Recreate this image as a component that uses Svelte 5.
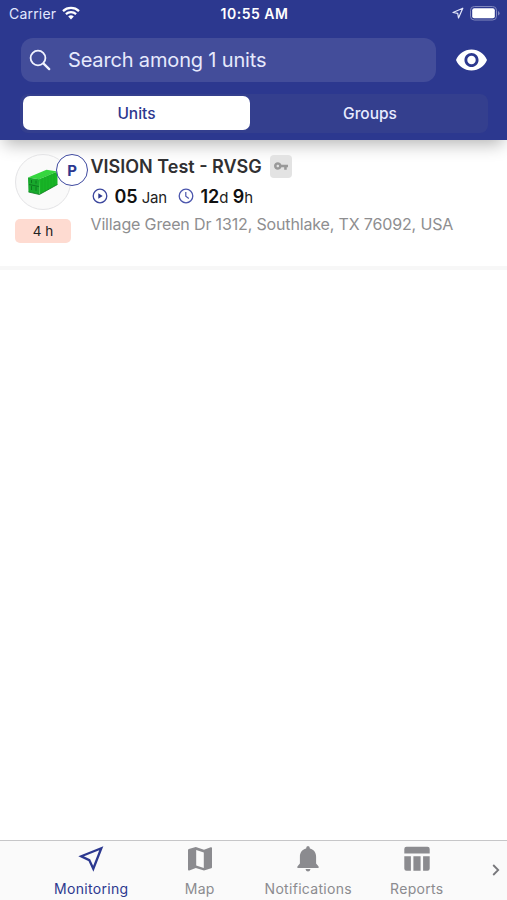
<script>
  let activeTab = $state("Monitoring");
  let activeSegment = $state("Units");

  const segments = ["Units", "Groups"];
  const tabs = ["Monitoring", "Map", "Notifications", "Reports"];
</script>

<div class="screen">
  <header class="header">
    <div class="status-bar">
      <div class="carrier">
        <span>Carrier</span>
        <svg class="wifi" viewBox="0 0 18 14" fill="none" stroke="#fff">
          <path d="M1 5.1a11.7 11.7 0 0 1 16 0" stroke-width="2.3" />
          <path d="M3.9 8.1a7.5 7.5 0 0 1 10.2 0" stroke-width="2.2" />
          <path d="M9 13.5 6.2 10.6a4 4 0 0 1 5.6 0z" fill="#fff" stroke="none" />
        </svg>
      </div>
      <span class="time">10:55 AM</span>
      <div class="indicators">
        <svg class="location" viewBox="0 0 12 12" fill="none" stroke="#e4e7fa">
          <path d="M10.8 1.2 1 5.5l4.7.8.8 4.6z" stroke-width="1.2" stroke-linejoin="round" />
        </svg>
        <svg class="battery" viewBox="0 0 30 15">
          <rect x=".5" y=".5" width="26" height="13.5" rx="3.8" fill="none" stroke="#8087bd" />
          <rect x="2.2" y="2.2" width="22.6" height="10.1" rx="2" fill="#fff" />
          <path d="M28 5v4.6q1.6-.7 1.6-2.3T28 5z" fill="#8087bd" />
        </svg>
      </div>
    </div>

    <div class="search-row">
      <div class="search">
        <svg viewBox="0 0 22 22" fill="none" stroke="#f1f3ff" stroke-linecap="round">
          <circle cx="9" cy="9" r="7.4" stroke-width="1.8" />
          <path d="m14.6 14.6 5.6 5.5" stroke-width="2.3" />
        </svg>
        <span>Search among 1 units</span>
      </div>
      <svg class="eye" viewBox="1 4.5 22 15" fill="#fff">
        <path
          d="M12 4.5C7 4.5 2.73 7.61 1 12c1.73 4.39 6 7.5 11 7.5s9.27-3.11 11-7.5c-1.73-4.39-6-7.5-11-7.5zM12 17c-2.76 0-5-2.24-5-5s2.24-5 5-5 5 2.24 5 5-2.24 5-5 5zm0-8c-1.66 0-3 1.34-3 3s1.34 3 3 3 3-1.34 3-3-1.34-3-3-3z"
        />
      </svg>
    </div>

    <div class="segments">
      {#each segments as segment}
        <button
          class="segment"
          class:selected={segment === activeSegment}
          onclick={() => (activeSegment = segment)}>{segment}</button
        >
      {/each}
    </div>
  </header>

  <main>
    <article class="unit">
      <div class="unit-side">
        <div class="avatar">
          <svg class="container-icon" viewBox="0 0 30 26">
            <path d="M0 8.5 18.5.8 29.5 2.5 11 10.2z" fill="#35d63e" />
            <path d="M0 8.5 11 10.2 11.4 25.5.5 23z" fill="#18a82c" />
            <path d="M11 10.2 29.5 2.5V15.5L11.4 25.5z" fill="#17b526" />
            <path
              d="M14 9v15M17 7.8v14.5M20 6.5v14M23 5.3v13.5M26 4v13"
              stroke="#15a524"
              stroke-width=".6"
            />
            <path
              d="M3.5 11v3M8 11.6v3M3.5 17v4M8 17.8v4M1 15.5l9.8 2"
              stroke="#0b741d"
              stroke-width=".9"
              fill="none"
            />
            <path d="m.5 23 10.9 2.5 18.100-10" fill="none" stroke="#0c7a1d" stroke-width=".8" />
          </svg>
          <span class="parking">P</span>
        </div>
        <span class="age">4 h</span>
      </div>

      <div class="unit-info">
        <div class="name-row">
          <h2>VISION Test - RVSG</h2>
          <span class="key">
            <svg viewBox="1 6 22 12" fill="#999">
              <path
                d="M12.65 10C11.83 7.67 9.61 6 7 6c-3.31 0-6 2.69-6 6s2.69 6 6 6c2.61 0 4.83-1.67 5.65-4H17v4h4v-4h2v-4H12.65zM7 14c-1.1 0-2-.9-2-2s.9-2 2-2 2 .9 2 2-.9 2-2 2z"
              />
            </svg>
          </span>
        </div>

        <div class="stats">
          <svg viewBox="0 0 16 16" fill="none" stroke="#3b469d">
            <circle cx="8" cy="8" r="6.8" stroke-width="1.3" />
            <path d="M6.3 5.2v5.6L10.7 8z" fill="#2c388f" stroke="none" />
          </svg>
          <span class="date"><b>05</b> Jan</span>
          <svg viewBox="0 0 16 16" fill="none" stroke="#4b56ad">
            <circle cx="8" cy="8" r="6.8" stroke-width="1.3" />
            <path d="M7.8 4v4.2l3 2.2" stroke-width="1.2" />
          </svg>
          <span class="duration"><b>12</b>d <b>9</b>h</span>
        </div>

        <p class="address">Village Green Dr 1312, Southlake, TX 76092, USA</p>
      </div>
    </article>
  </main>

  <nav class="tab-bar">
    {#each tabs as tab}
      <button class="tab" class:active={tab === activeTab} onclick={() => (activeTab = tab)}>
        <svg viewBox="0 0 26 26" fill="currentColor">
          {#if tab === "Monitoring"}
            <path
              d="M23.3 2.2 3.2 10.3l8.1 3.8 4 8.6z"
              fill="none"
              stroke="currentColor"
              stroke-width="2.3"
            />
          {:else if tab === "Map"}
            <path
              fill-rule="evenodd"
              d="M1 4q0-.8.8-1.1L8.800 1 17 3.700l6.700-2.500q1.300-.3 1.300.8v19.200q0 .8-.8 1.100L17 24.600 8.800 22l-6.500 2.400Q1 24.800 1 23.600zM9.200 4v15.500l7.600 2.400V6.400z"
            />
          {:else if tab === "Notifications"}
            <path
              d="M13 0q1.900 0 1.900 2.500c4.200 1 6.200 4.400 6.200 8.300v6.800l2.500 2.800v1.500H2.400v-1.500l2.500-2.800v-6.800c0-3.900 2-7.300 6.200-8.300Q11.100 0 13 0zM10.500 23h5q-.5 2.500-2.500 2.500T10.500 23z"
            />
          {:else}
            <path
              d="M2.500.7h21q2.200 0 2.200 2.200v4.600H.3V2.900Q.3.700 2.500.7zM.3 10.200h6.600v14.600H2.500q-2.200 0-2.200-2.200zM9.400 10.200h7.200v14.600H9.400zM19.100 10.200h6.600v12.400q0 2.200-2.200 2.200h-4.400z"
            />
          {/if}
        </svg>
        <span>{tab}</span>
      </button>
    {/each}
    <svg class="more" viewBox="0 0 8 12" fill="none" stroke="#77777b" stroke-width="1.8">
      <path d="m1.2 1 5 5-5 5" />
    </svg>
  </nav>
</div>

<style>
  :global(body) {
    background: #fff;
  }

  .screen {
    height: 100vh;
    display: flex;
    flex-direction: column;
    overflow: hidden;
    font-family: Inter, "Liberation Sans", sans-serif;
    background: #fff;
  }

  button {
    padding: 0;
    border: 0;
    background: none;
    font: inherit;
  }

  svg {
    display: block;
    flex: none;
  }

  .header {
    height: 140px;
    flex: none;
    background: #2c388f;
    box-shadow: 0 8px 16px -4px rgba(0, 0, 0, 0.3);
    color: #fff;
  }

  .status-bar {
    height: 26px;
    padding: 0 7px 0 9px;
    display: grid;
    grid-template-columns: 1fr auto 1fr;
    align-items: center;
    font-size: 14px;
  }

  .carrier {
    display: flex;
    align-items: center;
    gap: 6px;
    color: #e3e7ff;
    letter-spacing: 0.2px;
  }

  .wifi {
    width: 18px;
    height: 14px;
  }

  .time {
    font-weight: 600;
    letter-spacing: 0.5px;
  }

  .indicators {
    display: flex;
    align-items: center;
    justify-content: flex-end;
    gap: 6px;
  }

  .location {
    width: 12px;
    height: 12px;
  }

  .battery {
    width: 30px;
    height: 15px;
  }

  .search-row {
    margin-top: 12px;
    padding: 0 20px 0 21px;
    display: flex;
    align-items: center;
    justify-content: space-between;
  }

  .search {
    width: 415px;
    height: 44px;
    padding-left: 8px;
    box-sizing: border-box;
    display: flex;
    align-items: center;
    gap: 17px;
    border-radius: 12px;
    background: #434d9a;
    color: #e6e9fc;
    font-size: 20px;
    letter-spacing: -0.16px;
  }

  .search svg {
    width: 22px;
    height: 22px;
  }

  .eye {
    width: 31px;
    height: 22px;
  }

  .segments {
    height: 39px;
    margin: 12px 19px 0 20px;
    padding: 2px 0 3px 3px;
    box-sizing: border-box;
    display: flex;
    border-radius: 8px;
    background: #343f8e;
  }

  .segment {
    flex: 1;
    padding-left: 2px;
    border-radius: 7px;
    color: #e8ebff;
    font-size: 15.5px;
    font-weight: 500;
  }

  .segment.selected {
    flex: 0 0 227px;
    padding-left: 0;
    background: #fff;
    color: #2c388f;
  }

  main {
    flex: 1;
  }

  .unit {
    height: 130px;
    padding: 14px 15px 0;
    box-sizing: border-box;
    display: flex;
    gap: 20px;
    border-bottom: 4px solid #f7f7f7;
  }

  .unit-side {
    width: 56px;
  }

  .avatar {
    position: relative;
    width: 56px;
    height: 56px;
    box-sizing: border-box;
    display: flex;
    align-items: center;
    justify-content: center;
    border: 1px solid #e4e4e6;
    border-radius: 50%;
    background: #fafafa;
  }

  .container-icon {
    width: 30px;
    height: 26px;
  }

  .parking {
    position: absolute;
    top: -1px;
    left: 40px;
    width: 32px;
    height: 32px;
    box-sizing: border-box;
    border: 1.5px solid #3f4aa0;
    border-radius: 50%;
    background: #fff;
    color: #2c388f;
    font-size: 15px;
    font-weight: 700;
    line-height: 32px;
    text-align: center;
  }

  .age {
    display: block;
    height: 24px;
    margin-top: 9px;
    border-radius: 5px;
    background: #fedbd1;
    color: #222;
    font-size: 13.5px;
    line-height: 24px;
    text-align: center;
  }

  .unit-info {
    margin-left: -0.5px;
  }

  .name-row {
    height: 24px;
    display: flex;
    align-items: center;
    gap: 8px;
  }

  h2 {
    margin: 0;
    color: #303032;
    font-size: 18px;
    font-weight: 600;
    white-space: nowrap;
  }

  .key {
    width: 22px;
    height: 23px;
    display: flex;
    align-items: center;
    justify-content: center;
    border-radius: 4px;
    background: #e3e3e3;
  }

  .key svg {
    width: 14px;
    height: 8px;
  }

  .stats {
    height: 24px;
    margin-top: 6px;
    padding-left: 1px;
    display: flex;
    align-items: center;
    color: #222;
    font-size: 15px;
    white-space: nowrap;
  }

  .stats svg {
    width: 16px;
    height: 16px;
  }

  .stats b {
    color: #111;
    font-size: 18px;
    font-weight: 600;
  }

  .date {
    width: 63px;
    padding-left: 7px;
    letter-spacing: -0.2px;
  }

  .date b {
    letter-spacing: 0;
  }

  .duration {
    padding-left: 7px;
  }

  .address {
    margin: 6px 0 0;
    color: #8e8e90;
    font-size: 16px;
    line-height: 20px;
    letter-spacing: -0.15px;
    white-space: nowrap;
  }

  .tab-bar {
    height: 60px;
    flex: none;
    box-sizing: border-box;
    padding-left: 37px;
    display: flex;
    border-top: 1px solid #c6c6c8;
    background: #fafafa;
  }

  .tab {
    width: 108.5px;
    padding-top: 5px;
    display: flex;
    flex-direction: column;
    align-items: center;
    gap: 7px;
    color: #8b8b8f;
    font-size: 14px;
    line-height: 20px;
  }

  .tab svg {
    width: 26px;
    height: 26px;
  }

  .tab span {
    letter-spacing: 0.3px;
  }

  .tab.active {
    color: #2c388f;
  }

  .more {
    width: 8px;
    height: 12px;
    margin: 23px 0 0 21px;
  }
</style>
